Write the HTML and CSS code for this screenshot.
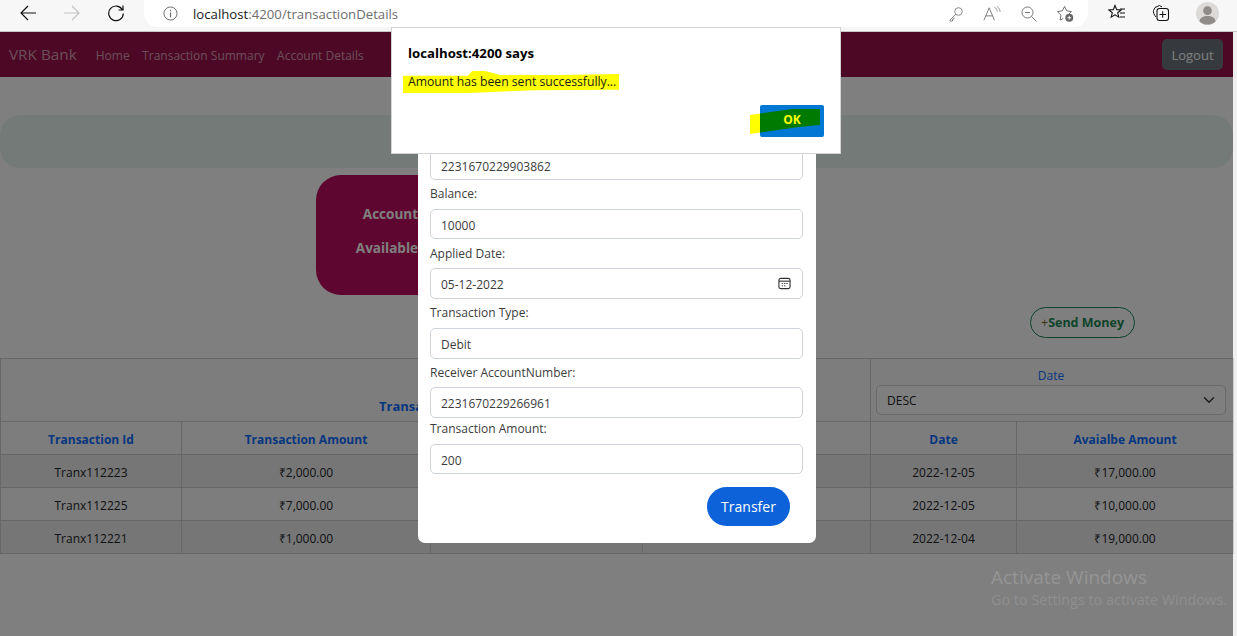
FILE: index.html
```html
<!DOCTYPE html>
<html lang="en">
<head>
    <meta charset="UTF-8">
    <meta name="viewport" content="width=device-width, initial-scale=1.0">
    <title>VRK Bank</title>
    <link rel="stylesheet" href="styles.css">
</head>
<body>
    <header class="toolbar">
        <svg class="tool-icon first" viewBox="0 0 18 18"><path d="M17 9H2M9 2 2 9l7 7" fill="none" stroke="#111" stroke-width="1.2"/></svg>
        <svg class="tool-icon" viewBox="0 0 18 18"><path d="M1 9h15M9 2l7 7-7 7" fill="none" stroke="#c4c4c4" stroke-width="1.2"/></svg>
        <svg class="tool-icon" viewBox="0 0 18 18"><path d="M15.5 6A7.3 7.3 0 1 0 16.3 9.5M16 1.500V6h-4.500" fill="none" stroke="#111" stroke-width="1.2"/></svg>
        <div class="url-pill">
            <svg class="info-icon" viewBox="0 0 16 16"><circle cx="8" cy="8" r="7" fill="none" stroke="#666" stroke-width="1"/><path d="M8 7v5M8 4v1.500" stroke="#666" stroke-width="1.200"/></svg>
            <span class="url"><span class="url-host">localhost</span>:4200/transactionDetails</span>
            <div class="pill-icons">
                <svg class="pill-icon" viewBox="0 0 16 16"><circle cx="10.500" cy="5.500" r="3.800" fill="none" stroke="#8a8a8a"/><path d="M7.800 8.200 2 14v1h2.500v-2H6v-1.500" fill="none" stroke="#8a8a8a"/></svg>
                <svg class="pill-icon wide" viewBox="0 0 20 16"><path d="M1 15 6.500 2 12 15M3 10.500h7" fill="none" stroke="#777"/><path d="M12 1.500c2 1 3 2.500 3 4.500M14.500.500c2.500 1.500 3.500 3.500 3.500 6" fill="none" stroke="#999"/></svg>
                <svg class="pill-icon" viewBox="0 0 16 16"><circle cx="6.500" cy="6.500" r="5.500" fill="none" stroke="#777"/><path d="M4 6.500h5M10.500 10.500 15.500 15.500" fill="none" stroke="#777"/></svg>
                <svg class="pill-icon wide" viewBox="0 0 20 18"><path d="M12.800 10.500 16.300 7l-5-.8L9 1.500 6.700 6.200l-5.200.8 3.700 3.800-.9 5.200 3.200-1.700" fill="none" stroke="#666"/><circle cx="14" cy="13.500" r="4.200" fill="#666"/><path d="M12 13.500h4M14 11.500v4" stroke="#fff"/></svg>
            </div>
        </div>
        <div class="browser-icons">
            <svg class="tool-icon" viewBox="0 0 18 18"><path d="M7 1.500 8.700 5.600l4.500.3-3.500 2.900 1.100 4.400L7 10.900 3.200 13.200l1.100-4.400L.8 5.900l4.500-.3z" fill="none" stroke="#111" stroke-width="1.100"/><path d="M12 5h5M12 9h5M12 13h5" stroke="#111"/></svg>
            <svg class="tool-icon" viewBox="0 0 18 18"><path d="M4 13C2 11 1 8 1.500 6.500L3 3.500 7.500 1.500 10 3" fill="none" stroke="#111"/><rect x="5" y="4.500" width="11.500" height="12" rx="2.500" fill="#f7f7f7" stroke="#111" stroke-width="1.100"/><path d="M7.500 10.500h6.500M10.700 7.200v6.600" stroke="#111"/></svg>
            <span class="avatar"><svg viewBox="0 0 24 24"><circle cx="12" cy="12" r="12" fill="#dcdad8"/><circle cx="12" cy="9" r="4.500" fill="#8f8b88"/><path d="M3.500 20c1-4 4-5.500 8.500-5.500s7.500 1.500 8.500 5.500a12 12 0 0 1-17 0z" fill="#8f8b88"/></svg></span>
        </div>
    </header>

    <div class="app">
        <nav class="navbar">
            <a class="brand">VRK Bank</a>
            <a class="nav-link">Home</a>
            <a class="nav-link">Transaction Summary</a>
            <a class="nav-link">Account Details</a>
            <button class="logout">Logout</button>
        </nav>

        <div class="banner"></div>

        <section class="summary-card">
            <div class="summary-labels">
                <p>Account</p>
                <p>Available</p>
            </div>
        </section>

        <div class="actions">
            <button class="send-money"><span class="plus">+</span>Send Money</button>
        </div>

        <table class="tx-table">
            <colgroup>
                <col class="col-id"><col class="col-amount"><col class="col-type"><col class="col-account"><col class="col-date"><col class="col-balance">
            </colgroup>
            <tr class="filter-row">
                <th colspan="4" class="filter-type">Transa</th>
                <th colspan="2" class="filter-date">
                    <label class="filter-label">Date</label>
                    <div class="select-box">DESC
                        <svg class="chevron" viewBox="0 0 16 16"><path d="M2 5l6 6 6-6" fill="none" stroke="#343a40" stroke-width="2" stroke-linecap="round" stroke-linejoin="round"/></svg>
                    </div>
                </th>
            </tr>
            <tr class="head-row">
                <th>Transaction Id</th>
                <th>Transaction Amount</th>
                <th></th>
                <th></th>
                <th>Date</th>
                <th>Avaialbe Amount</th>
            </tr>
            <tr class="odd">
                <td>Tranx112223</td><td>₹2,000.00</td><td></td><td></td><td>2022-12-05</td><td>₹17,000.00</td>
            </tr>
            <tr>
                <td>Tranx112225</td><td>₹7,000.00</td><td></td><td></td><td>2022-12-05</td><td>₹10,000.00</td>
            </tr>
            <tr class="odd">
                <td>Tranx112221</td><td>₹1,000.00</td><td></td><td></td><td>2022-12-04</td><td>₹19,000.00</td>
            </tr>
        </table>

        <div class="backdrop"></div>

        <form class="modal">
            <div class="field">2231670229903862</div>
            <label class="field-label">Balance:</label>
            <div class="field">10000</div>
            <label class="field-label low">Applied Date:</label>
            <div class="field tall date-field">05-12-2022
                <svg class="calendar" viewBox="0 0 14 14"><rect x="1" y="1.500" width="12" height="11" rx="2" fill="none" stroke="#333" stroke-width="1.200"/><path d="M1 4.500h12" stroke="#333" stroke-width="1.200"/><path d="M4 7h1.500M6.500 7H8M9 7h1.500M4 9.500h1.500M6.500 9.500H8" stroke="#333"/></svg>
            </div>
            <label class="field-label">Transaction Type:</label>
            <div class="field tall">Debit</div>
            <label class="field-label close">Receiver AccountNumber:</label>
            <div class="field tall">2231670229266961</div>
            <label class="field-label tight">Transaction Amount:</label>
            <div class="field">200</div>
            <div class="modal-footer">
                <button type="button" class="transfer">Transfer</button>
            </div>
        </form>

        <div class="watermark">
            <div class="wm-title">Activate Windows</div>
            <div class="wm-sub">Go to Settings to activate Windows.</div>
        </div>
    </div>

    <div class="alert-box">
        <h4 class="alert-title">localhost:4200 says</h4>
        <p class="alert-msg"><span class="marker">Amount has been sent successfully...</span></p>
        <div class="alert-footer">
            <button class="alert-ok"><span class="ok-text">OK</span></button>
        </div>
    </div>
</body>
</html>
```

FILE: styles.css
```css
* {
    box-sizing: border-box;
}
html, body {
    margin: 0;
    height: 636px;
    overflow: hidden;
}
body {
    position: relative;
    background: #f0f0f0;
    color: #212529;
    font-family: "Open Sans", "Liberation Sans", sans-serif;
    font-size: 12px;
}

/* browser chrome */
.toolbar {
    display: flex;
    align-items: center;
    height: 32px;
    padding-bottom: 5px;
    background: #f7f7f7;
    border-bottom: 1px solid #c8c8c8;
}
.tool-icon {
    width: 18px;
    height: 18px;
    margin-right: 26px;
}
.tool-icon.first {
    margin-left: 19px;
}
.url-pill {
    display: flex;
    align-items: center;
    width: 944px;
    height: 32px;
    margin: 0 0 0 -7px;
    padding: 5px 0 0 19px;
    background: #fff;
    border-radius: 0 0 14px 14px;
    transform: translateY(-2px);
}
.info-icon {
    width: 15px;
    height: 15px;
    margin-right: 15px;
}
.url {
    font-size: 13.200px;
    color: #6d6d6d;
}
.url-host {
    color: #1a1a1a;
}
.pill-icons {
    display: flex;
    align-items: center;
    gap: 19px;
    margin-left: auto;
    margin-right: 13px;
}
.pill-icon {
    width: 16px;
    height: 16px;
}
.pill-icon.wide {
    width: 19px;
    height: 17px;
}
.browser-icons {
    display: flex;
    align-items: center;
    margin-left: 20px;
}
.avatar {
    width: 23px;
    height: 23px;
}
.avatar svg {
    display: block;
}

/* page */
.app {
    position: relative;
    width: 1233px;
    height: 604px;
    background: #fff;
}
.navbar {
    display: flex;
    align-items: center;
    height: 45px;
    padding: 0 10px 0 9px;
    background: #9a104a;
}
.brand {
    margin: -1px 19px 0 0;
    font-size: 15.300px;
    color: rgba(255, 255, 255, 0.6);
}
.nav-link {
    margin: 2px 12.500px 0 0;
    color: rgba(255, 255, 255, 0.6);
}
.logout {
    margin-left: auto;
    width: 61px;
    height: 31px;
    padding: 0;
    background: #6c757d;
    border: none;
    border-radius: 5px;
    color: #fff;
    font: inherit;
    font-size: 13px;
}
.banner {
    height: 53px;
    margin-top: 38px;
    background: #e6f4ee;
    border-radius: 20px;
}
.summary-card {
    display: flex;
    align-items: center;
    width: 400px;
    height: 120px;
    margin: 7px 0 0 316px;
    padding-bottom: 8px;
    background: #be0c60;
    border-radius: 25px;
    color: #fff;
    font-size: 13.500px;
    font-weight: 700;
}
.summary-labels {
    width: 102px;
    text-align: right;
}
.summary-labels p {
    margin: 0;
    line-height: 34px;
}
.actions {
    display: flex;
    justify-content: flex-end;
    height: 63px;
    padding: 12px 98px 0 0;
}
.send-money {
    width: 105px;
    height: 31px;
    padding: 0;
    background: none;
    border: 1px solid #198754;
    border-radius: 16px;
    color: #198754;
    font: inherit;
    font-size: 12.500px;
    font-weight: 700;
}
.plus {
    font-weight: 400;
    color: #7a6a2a;
}

/* table */
.tx-table {
    width: 1233px;
    background: #fafafa;
    border-collapse: collapse;
    table-layout: fixed;
    text-align: center;
}
.tx-table th, .tx-table td {
    padding: 2px 0 0;
    border: 1px solid #cfcfcf;
}
.col-id { width: 181px; }
.col-amount { width: 249px; }
.col-type { width: 212px; }
.col-account { width: 228px; }
.col-date { width: 146px; }
.col-balance { width: 217px; }
.filter-row {
    height: 63px;
}
.tx-table .filter-type {
    padding: 0 0 6px 0;
    vertical-align: bottom;
    font-size: 13px;
    text-align: left;
    text-indent: 378px;
    color: #0d6efd;
}
.tx-table .filter-date {
    padding: 7px 7px 5px 5px;
    font-weight: 400;
}
.filter-label {
    display: block;
    line-height: 18px;
    color: #0d6efd;
}
.select-box {
    display: flex;
    align-items: center;
    justify-content: space-between;
    height: 30px;
    padding: 0 10px;
    border: 1px solid #ced4da;
    border-radius: 5px;
    background: #fff;
    color: #212529;
}
.chevron {
    width: 12px;
    height: 12px;
}
.head-row {
    height: 33px;
    color: #0d6efd;
}
.tx-table td {
    height: 33px;
}
.odd td {
    background: #ececec;
}

.backdrop {
    position: absolute;
    inset: 0;
    background: rgba(0, 0, 0, 0.5);
}

/* transfer modal */
.modal {
    position: absolute;
    top: 104px;
    left: 418px;
    width: 398px;
    height: 407px;
    padding: 14px 13px 0 12px;
    background: #fff;
    border-radius: 7px;
}
.field-label {
    display: block;
    margin: 4px 0 5px;
    line-height: 20px;
    color: #3c3c3c;
}
.field-label.low {
    margin: 5px 0 4px;
}
.field-label.close {
    margin-bottom: 4px;
}
.field-label.tight {
    margin-top: 1px;
}
.field {
    display: flex;
    align-items: center;
    justify-content: space-between;
    height: 30px;
    padding: 2px 11px 0 10px;
    border: 1px solid #ced4da;
    border-radius: 5px;
    color: #3c3c3c;
}
.field.tall {
    height: 31px;
}
.calendar {
    width: 13px;
    height: 13px;
    margin-top: -2px;
}
.modal-footer {
    display: flex;
    justify-content: flex-end;
    margin-top: 13px;
    padding-right: 13px;
}
.transfer {
    width: 83px;
    height: 39px;
    padding: 0;
    background: #0d62d9;
    border: none;
    border-radius: 20px;
    color: #fff;
    font: inherit;
    font-size: 14px;
}

.watermark {
    position: absolute;
    left: 991px;
    top: 532px;
    white-space: nowrap;
}
.wm-title {
    font-size: 19px;
    line-height: 26px;
    color: #959595;
}
.wm-sub {
    font-size: 14.400px;
    line-height: 20px;
    color: #8f8f8f;
}

/* browser alert */
.alert-box {
    position: absolute;
    top: 27px;
    left: 391px;
    width: 450px;
    height: 127px;
    padding: 17px 16px 0 16px;
    background: #fff;
    border: 1px solid #d4d4d4;
}
.alert-title {
    margin: 0;
    font-size: 13.200px;
    line-height: 17px;
    font-weight: 700;
    color: #000;
}
.alert-msg {
    margin: 9px 0 0 -5px;
    line-height: 22px;
    font-size: 12.200px;
}
.marker {
    display: inline-block;
    padding: 0 3px 0 5px;
    background: #ffff00;
    color: #1a1a1a;
    clip-path: polygon(0 22%, 30% 22%, 32% 0, 38% 0, 45% 18%, 72% 18%, 100% 14%, 100% 85%, 60% 88%, 30% 100%, 0 100%);
}
.alert-footer {
    display: flex;
    justify-content: flex-end;
    margin-top: 12px;
}
.alert-ok {
    position: relative;
    width: 64px;
    height: 32px;
    padding: 0 0 3px;
    background: #0078d4;
    border: none;
    border-radius: 2px;
}
/* highlighter stroke across the button */
.alert-ok::before {
    content: "";
    position: absolute;
    left: -10px;
    top: 4px;
    width: 70px;
    height: 25px;
    background: linear-gradient(90deg, #ffff00 10px, #007a00 10px);
    clip-path: polygon(0 24%, 60% 0, 100% 0, 100% 64%, 70% 72%, 0 100%);
}
.ok-text {
    position: relative;
    color: #ffff00;
    font-family: "Open Sans", sans-serif;
    font-size: 12px;
    font-weight: 700;
}
```
